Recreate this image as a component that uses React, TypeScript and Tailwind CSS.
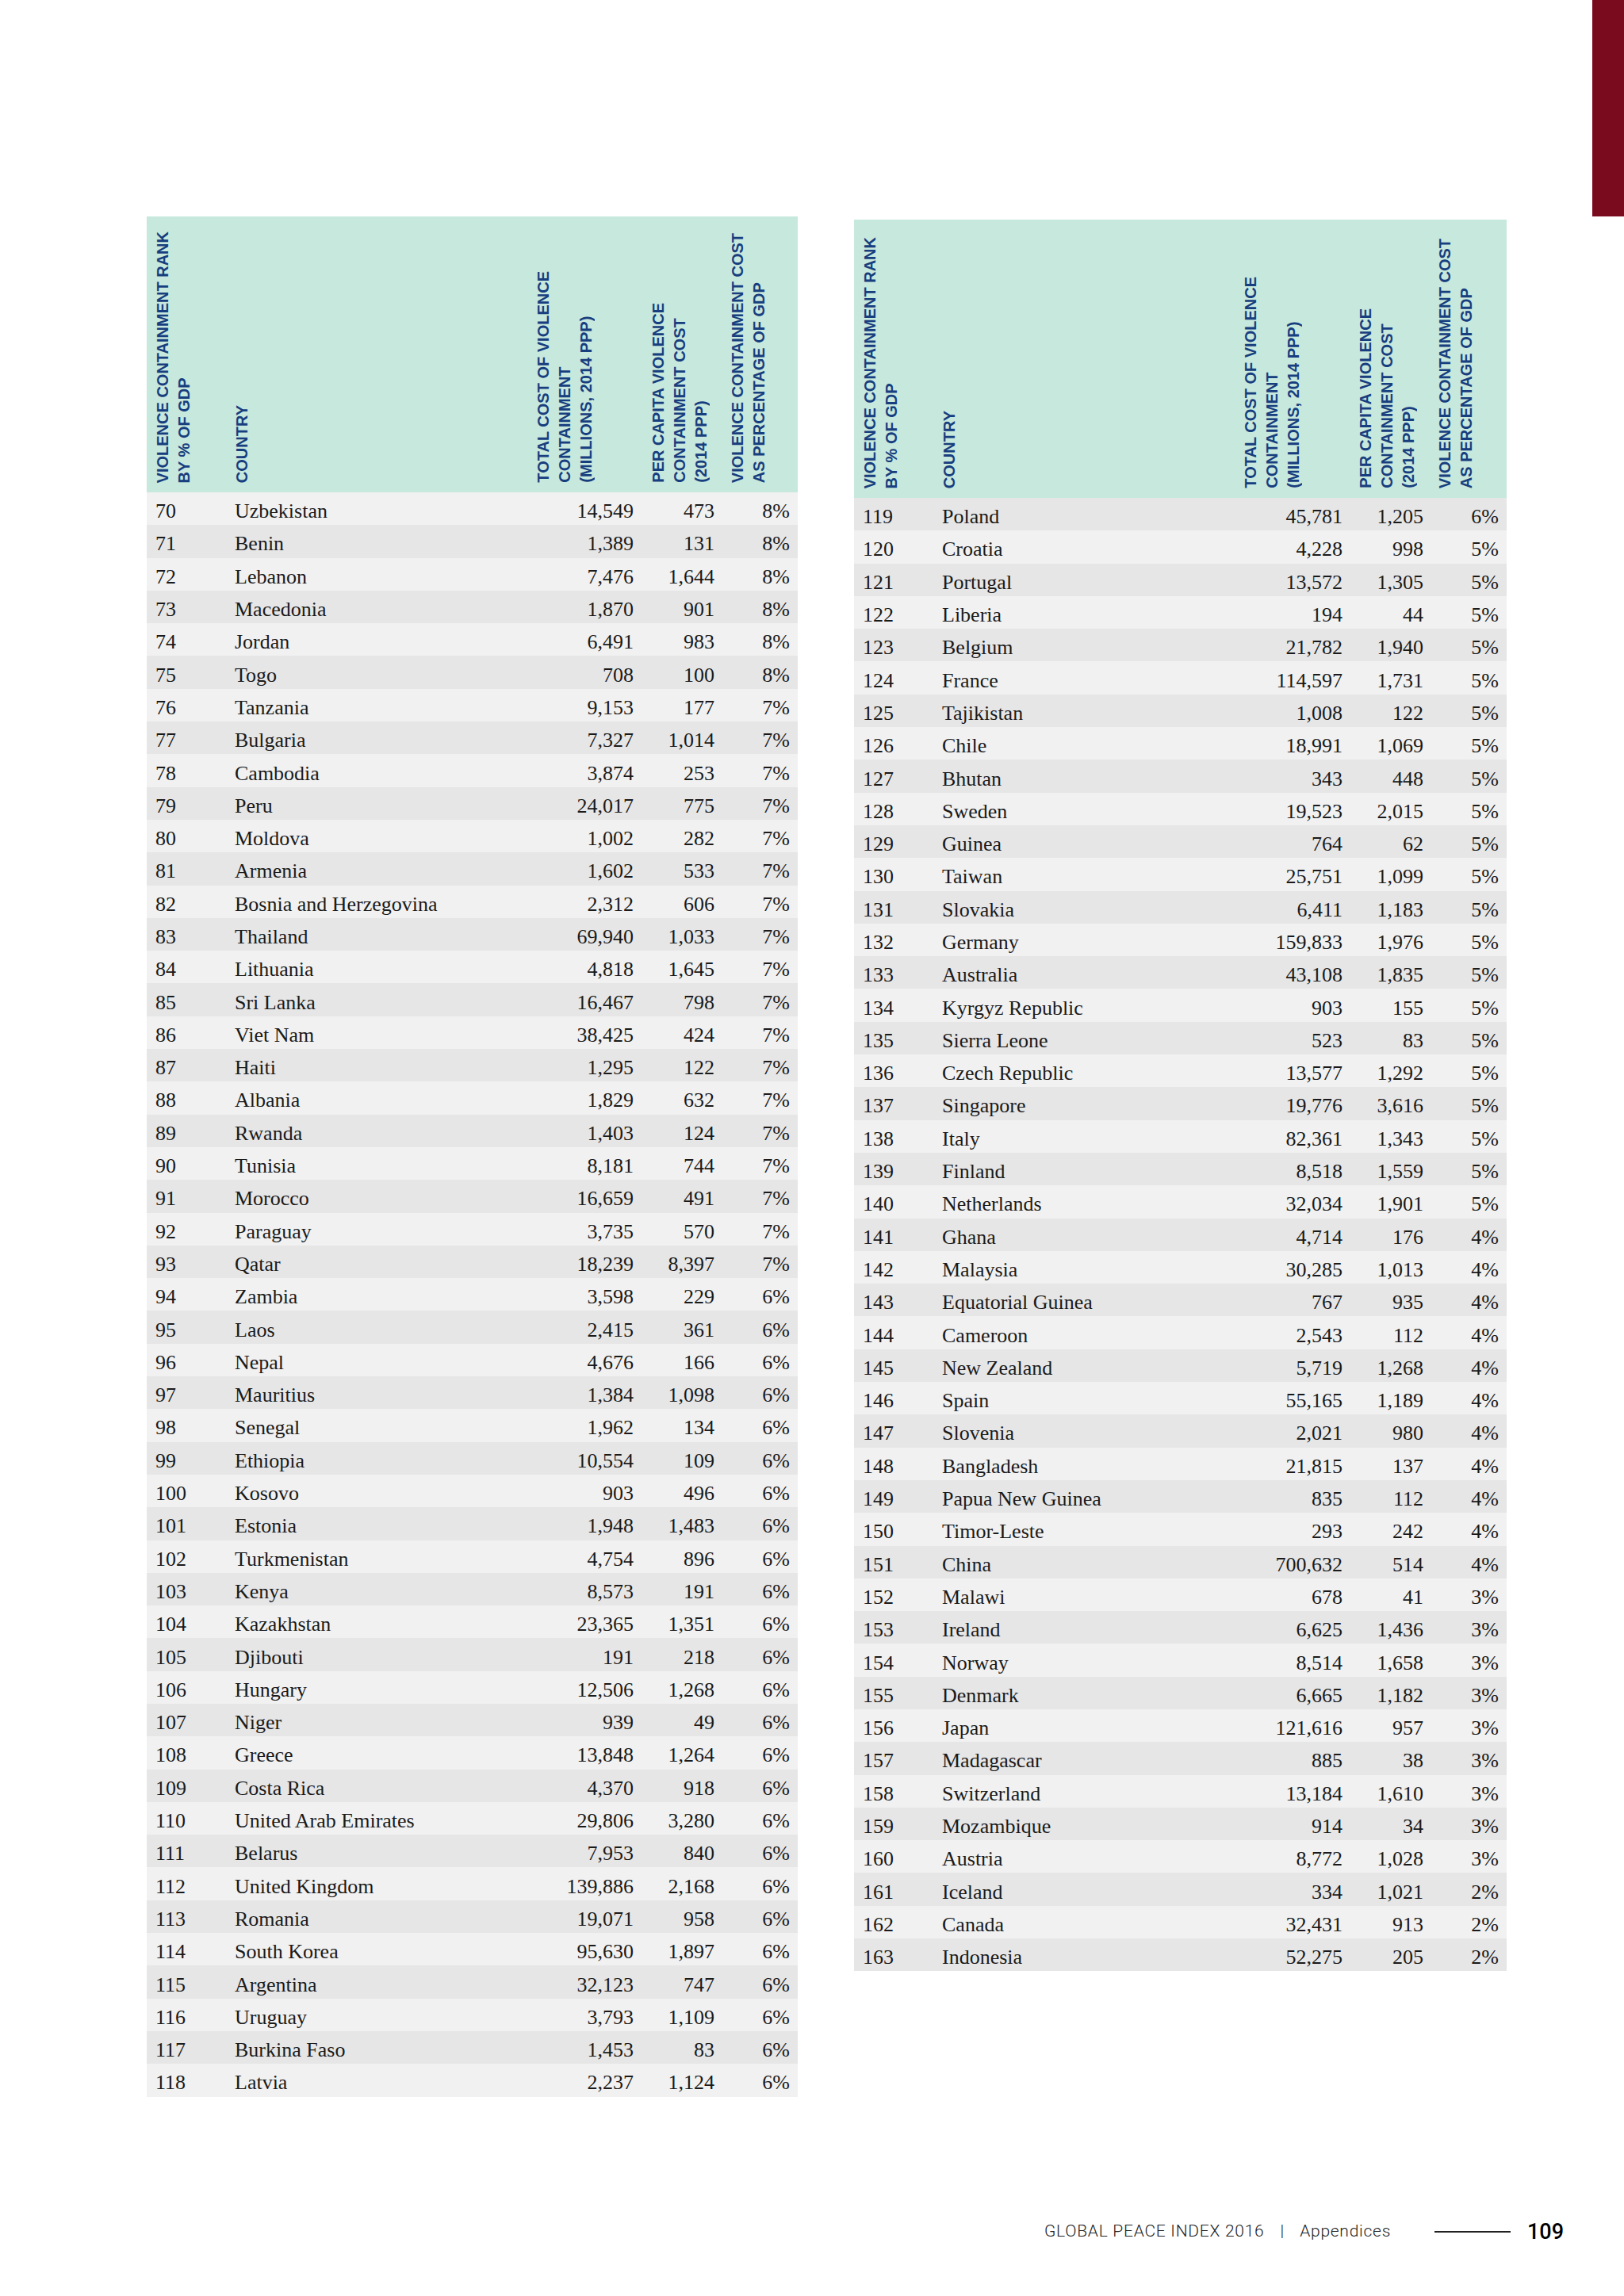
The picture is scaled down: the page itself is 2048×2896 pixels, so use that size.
type Row = [string, string, string, string, string];

const leftRows: Row[] = [
  ["70", "Uzbekistan", "14,549", "473", "8%"],
  ["71", "Benin", "1,389", "131", "8%"],
  ["72", "Lebanon", "7,476", "1,644", "8%"],
  ["73", "Macedonia", "1,870", "901", "8%"],
  ["74", "Jordan", "6,491", "983", "8%"],
  ["75", "Togo", "708", "100", "8%"],
  ["76", "Tanzania", "9,153", "177", "7%"],
  ["77", "Bulgaria", "7,327", "1,014", "7%"],
  ["78", "Cambodia", "3,874", "253", "7%"],
  ["79", "Peru", "24,017", "775", "7%"],
  ["80", "Moldova", "1,002", "282", "7%"],
  ["81", "Armenia", "1,602", "533", "7%"],
  ["82", "Bosnia and Herzegovina", "2,312", "606", "7%"],
  ["83", "Thailand", "69,940", "1,033", "7%"],
  ["84", "Lithuania", "4,818", "1,645", "7%"],
  ["85", "Sri Lanka", "16,467", "798", "7%"],
  ["86", "Viet Nam", "38,425", "424", "7%"],
  ["87", "Haiti", "1,295", "122", "7%"],
  ["88", "Albania", "1,829", "632", "7%"],
  ["89", "Rwanda", "1,403", "124", "7%"],
  ["90", "Tunisia", "8,181", "744", "7%"],
  ["91", "Morocco", "16,659", "491", "7%"],
  ["92", "Paraguay", "3,735", "570", "7%"],
  ["93", "Qatar", "18,239", "8,397", "7%"],
  ["94", "Zambia", "3,598", "229", "6%"],
  ["95", "Laos", "2,415", "361", "6%"],
  ["96", "Nepal", "4,676", "166", "6%"],
  ["97", "Mauritius", "1,384", "1,098", "6%"],
  ["98", "Senegal", "1,962", "134", "6%"],
  ["99", "Ethiopia", "10,554", "109", "6%"],
  ["100", "Kosovo", "903", "496", "6%"],
  ["101", "Estonia", "1,948", "1,483", "6%"],
  ["102", "Turkmenistan", "4,754", "896", "6%"],
  ["103", "Kenya", "8,573", "191", "6%"],
  ["104", "Kazakhstan", "23,365", "1,351", "6%"],
  ["105", "Djibouti", "191", "218", "6%"],
  ["106", "Hungary", "12,506", "1,268", "6%"],
  ["107", "Niger", "939", "49", "6%"],
  ["108", "Greece", "13,848", "1,264", "6%"],
  ["109", "Costa Rica", "4,370", "918", "6%"],
  ["110", "United Arab Emirates", "29,806", "3,280", "6%"],
  ["111", "Belarus", "7,953", "840", "6%"],
  ["112", "United Kingdom", "139,886", "2,168", "6%"],
  ["113", "Romania", "19,071", "958", "6%"],
  ["114", "South Korea", "95,630", "1,897", "6%"],
  ["115", "Argentina", "32,123", "747", "6%"],
  ["116", "Uruguay", "3,793", "1,109", "6%"],
  ["117", "Burkina Faso", "1,453", "83", "6%"],
  ["118", "Latvia", "2,237", "1,124", "6%"],
];

const rightRows: Row[] = [
  ["119", "Poland", "45,781", "1,205", "6%"],
  ["120", "Croatia", "4,228", "998", "5%"],
  ["121", "Portugal", "13,572", "1,305", "5%"],
  ["122", "Liberia", "194", "44", "5%"],
  ["123", "Belgium", "21,782", "1,940", "5%"],
  ["124", "France", "114,597", "1,731", "5%"],
  ["125", "Tajikistan", "1,008", "122", "5%"],
  ["126", "Chile", "18,991", "1,069", "5%"],
  ["127", "Bhutan", "343", "448", "5%"],
  ["128", "Sweden", "19,523", "2,015", "5%"],
  ["129", "Guinea", "764", "62", "5%"],
  ["130", "Taiwan", "25,751", "1,099", "5%"],
  ["131", "Slovakia", "6,411", "1,183", "5%"],
  ["132", "Germany", "159,833", "1,976", "5%"],
  ["133", "Australia", "43,108", "1,835", "5%"],
  ["134", "Kyrgyz Republic", "903", "155", "5%"],
  ["135", "Sierra Leone", "523", "83", "5%"],
  ["136", "Czech Republic", "13,577", "1,292", "5%"],
  ["137", "Singapore", "19,776", "3,616", "5%"],
  ["138", "Italy", "82,361", "1,343", "5%"],
  ["139", "Finland", "8,518", "1,559", "5%"],
  ["140", "Netherlands", "32,034", "1,901", "5%"],
  ["141", "Ghana", "4,714", "176", "4%"],
  ["142", "Malaysia", "30,285", "1,013", "4%"],
  ["143", "Equatorial Guinea", "767", "935", "4%"],
  ["144", "Cameroon", "2,543", "112", "4%"],
  ["145", "New Zealand", "5,719", "1,268", "4%"],
  ["146", "Spain", "55,165", "1,189", "4%"],
  ["147", "Slovenia", "2,021", "980", "4%"],
  ["148", "Bangladesh", "21,815", "137", "4%"],
  ["149", "Papua New Guinea", "835", "112", "4%"],
  ["150", "Timor-Leste", "293", "242", "4%"],
  ["151", "China", "700,632", "514", "4%"],
  ["152", "Malawi", "678", "41", "3%"],
  ["153", "Ireland", "6,625", "1,436", "3%"],
  ["154", "Norway", "8,514", "1,658", "3%"],
  ["155", "Denmark", "6,665", "1,182", "3%"],
  ["156", "Japan", "121,616", "957", "3%"],
  ["157", "Madagascar", "885", "38", "3%"],
  ["158", "Switzerland", "13,184", "1,610", "3%"],
  ["159", "Mozambique", "914", "34", "3%"],
  ["160", "Austria", "8,772", "1,028", "3%"],
  ["161", "Iceland", "334", "1,021", "2%"],
  ["162", "Canada", "32,431", "913", "2%"],
  ["163", "Indonesia", "52,275", "205", "2%"],
];

// rotated header label, reads bottom to top
const Vert = ({ lines, className }: { lines: string[]; className: string }) => (
  <div className={`[writing-mode:vertical-rl] rotate-180 text-[20px] leading-[27px] font-bold text-[#173e7e] whitespace-nowrap ${className}`}>
    {lines.map((l) => (
      <div key={l}>{l}</div>
    ))}
  </div>
);

const DataTable = ({ rows, darkFirst, width, headerH }: { rows: Row[]; darkFirst: boolean; width: string; headerH: string }) => {
  return (
    <div className={width}>
      <div className={`bg-[#c7e8dd] flex items-end pl-[7px] pb-[12px] font-['Liberation_Sans',Arial,sans-serif] ${headerH}`}>
        <Vert lines={["VIOLENCE CONTAINMENT RANK", "BY % OF GDP"]} className="" />
        <Vert lines={["COUNTRY"]} className="ml-[46px]" />
        <Vert lines={["TOTAL COST OF VIOLENCE", "CONTAINMENT", "(MILLIONS, 2014 PPP)"]} className="ml-[353px]" />
        <Vert lines={["PER CAPITA VIOLENCE", "CONTAINMENT COST", "(2014 PPP)"]} className="ml-[64px]" />
        <Vert lines={["VIOLENCE CONTAINMENT COST", "AS PERCENTAGE OF GDP"]} className="ml-[19px]" />
      </div>
      <div className="font-['Liberation_Serif','Times_New_Roman',serif] text-[26px] text-[#1a1a1a]">
        {rows.map((r, i) => {
          const dark = darkFirst ? i % 2 === 0 : i % 2 === 1;
          return (
            <div
              key={r[0]}
              className={`flex items-center h-[41.3px] pt-[7px] pl-[11px] pr-[10px] leading-none ${dark ? "bg-[#e6e6e7]" : "bg-[#f1f1f1]"}`}
            >
              <div className="w-[100px]">{r[0]}</div>
              <div className="flex-1 whitespace-nowrap">{r[1]}</div>
              <div className="w-[150px] text-right">{r[2]}</div>
              <div className="w-[102px] text-right">{r[3]}</div>
              <div className="w-[95px] text-right">{r[4]}</div>
            </div>
          );
        })}
      </div>
    </div>
  );
};

export default function App() {
  return (
    <div className="w-[2048px] h-[2896px] bg-white flex flex-col">
      <div className="h-[273px] flex justify-end shrink-0">
        <div className="w-[40px] h-full bg-[#7a0b1f]"></div>
      </div>

      <div className="flex items-start pl-[185px] gap-[71px]">
        <DataTable rows={leftRows} darkFirst={false} width="w-[821px]" headerH="h-[348px]" />
        <div className="mt-[4px]">
          <DataTable rows={rightRows} darkFirst={true} width="w-[823px]" headerH="h-[351px]" />
        </div>
      </div>

      <div className="mt-auto mb-[62px] h-[38px] flex items-center pl-[1317px] pr-[76px] font-['Roboto','Liberation_Sans',sans-serif] text-[#222]">
        <span className="text-[21px] font-light tracking-[0.035em] whitespace-nowrap">GLOBAL PEACE INDEX 2016</span>
        <span className="text-[21px] font-light mx-[20px]">|</span>
        <span className="text-[21px] font-light tracking-[0.035em]">Appendices</span>
        <div className="ml-auto w-[96px] h-[2px] bg-[#222]"></div>
        <span className="ml-[21px] text-[27px] font-medium text-black">109</span>
      </div>
    </div>
  );
}
